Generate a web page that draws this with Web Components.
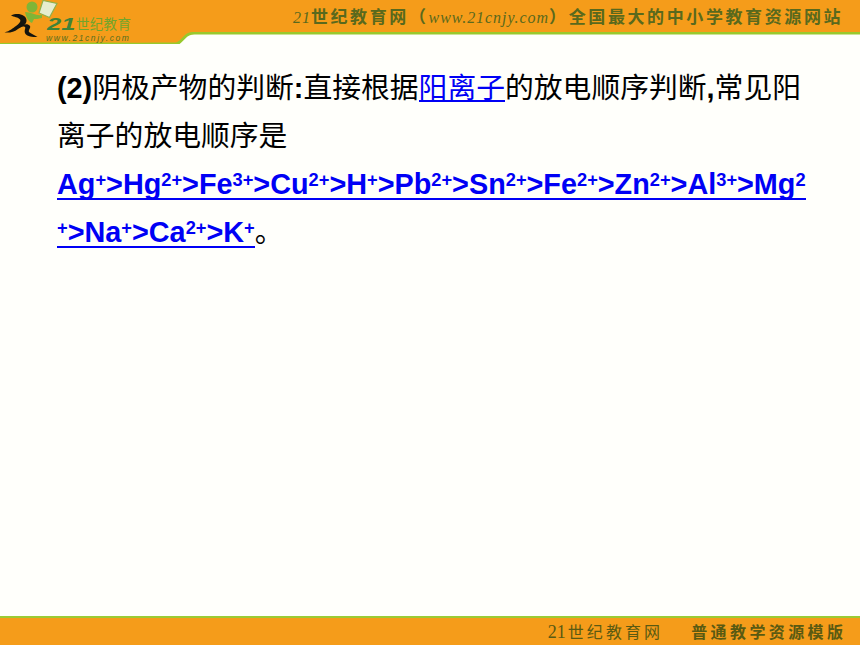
<!DOCTYPE html>
<html lang="zh"><head><meta charset="utf-8">
<style>
html,body{margin:0;padding:0;background:#fffffb}
body{width:860px;height:645px;display:flex;flex-direction:column;overflow:hidden;font-family:"Liberation Sans","Noto Sans CJK SC",sans-serif}
main{flex:1}
</style></head><body>
<site-header></site-header>
<main><lesson-text>
<text-line><b>(2)</b>阴极产物的判断<b>:</b>直接根据<u-link>阳离子</u-link>的放电顺序判断<b>,</b>常见阳</text-line>
<text-line>离子的放电顺序是</text-line>
<text-line><u-link strong>Ag<sup-s>+</sup-s>&gt;Hg<sup-s>2+</sup-s>&gt;Fe<sup-s>3+</sup-s>&gt;Cu<sup-s>2+</sup-s>&gt;H<sup-s>+</sup-s>&gt;Pb<sup-s>2+</sup-s>&gt;Sn<sup-s>2+</sup-s>&gt;Fe<sup-s>2+</sup-s>&gt;Zn<sup-s>2+</sup-s>&gt;Al<sup-s>3+</sup-s>&gt;Mg<sup-s>2</sup-s></u-link></text-line>
<text-line><u-link strong><sup-s>+</sup-s>&gt;Na<sup-s>+</sup-s>&gt;Ca<sup-s>2+</sup-s>&gt;K<sup-s>+</sup-s></u-link>。</text-line>
</lesson-text></main>
<site-footer></site-footer>
<script>
function def(name,html){customElements.define(name,class extends HTMLElement{constructor(){super();this.attachShadow({mode:'open'}).innerHTML=html}})}
def('lesson-text',`<style>:host{display:block;padding:20px 0 0 57px;font-size:28.8px;color:#000}</style><slot></slot>`);
def('text-line',`<style>:host{display:block;height:48px;line-height:48px;white-space:nowrap}::slotted(b){font-weight:700}</style><slot></slot>`);
def('u-link',`<style>:host{color:#0000f5;background:linear-gradient(#0000f5,#0000f5) 0 28px/100% 2px no-repeat}:host([strong]){font-weight:700;background-position:0 30px}</style><slot></slot>`);
def('sup-s',`<style>:host{font-size:.634em;vertical-align:.42em;line-height:0}</style><slot></slot>`);
def('run-logo',`<style>:host{display:block;width:46px;height:44px;flex:none}svg{display:block;overflow:visible}</style>
<svg width="46" height="44" viewBox="0 0 46 44">
<path d="M43 0.500 57 3.500 49.500 17.500 39 13Z" fill="#e6edcf" stroke="#8fb04a" stroke-width="1.200"/>
<circle cx="32" cy="7" r="5.500" fill="#7fb537"/>
<path d="M25 12C31 12 36 16 42 15L42 18C38 19 36 19 34 19L32 23C28 21 26 17 25 12Z" fill="#7fb537"/>
<path d="M11 15.500C18 12 26 15 26.500 20C27 25 21 27 18 29C14 32 10 33 4.500 32.500C10 31 13 28 16 26C20 23 21 21 20 19.500C18 17 14 17 11 15.500Z" fill="#15150f"/>
<path d="M19 27C23 24 28 23 30 26C31 28 28 30 29 32C31 34 35 35 37.500 37C32 37.500 26 36 25 33C24 30 26 28 25 27C23 26 21 27 19 27Z" fill="#15150f"/>
</svg>`);
def('site-header',`<style>
:host{display:block;height:44px;position:relative}
svg.bg{position:absolute;inset:0}
.row{position:relative;display:flex;height:44px}
.brand{width:100px;padding-top:18px;box-sizing:border-box;display:flex;flex-direction:column;flex:none}
.cn{display:flex;align-items:center;height:14px;white-space:nowrap;color:#71a52c;font:400 13.500px/14px "Liberation Sans","Noto Sans CJK SC",sans-serif;letter-spacing:.3px}
.cn b{display:inline-block;width:29px;margin-left:1px;flex:none;color:#3f8238;font:italic 700 17px/14px "Liberation Sans",sans-serif;letter-spacing:0;transform:scaleX(1.5);transform-origin:left center}
.en{font:italic 400 8.500px/7px "Liberation Sans",sans-serif;color:#566f20;letter-spacing:1.550px;white-space:nowrap;margin-top:3px}
.slogan{margin-left:147px;height:32px;white-space:nowrap;color:#59691d;font:700 17px/35px "Liberation Serif","Noto Sans CJK SC",sans-serif;letter-spacing:2.600px}
.slogan i{font-family:"Liberation Serif",serif;font-weight:400;font-size:16px;letter-spacing:.95px}
</style>
<svg class="bg" width="860" height="44" viewBox="0 0 860 44"><path d="M0 0H860V34H195C186 34 184 38 178 44H0Z" fill="#f59c1a"/><path d="M0 43C60 42 120 43 176 42.500C182 41 184 32 192 32H860V34.500H194C186 34.500 184 42 178 45H0Z" fill="#99c92c"/></svg>
<div class="row"><run-logo></run-logo><div class="brand"><div class="cn"><b>21</b>世纪教育</div><div class="en">www.21cnjy.com</div></div><div class="slogan"><i>21</i>世纪教育网<span>（</span><i>www.21cnjy.com</i><span>）</span>全国最大的中小学教育资源网站</div></div>`);
def('site-footer',`<style>
:host{display:flex;justify-content:flex-end;box-sizing:border-box;height:29px;background:#f59c1a;border-top:2px solid #9bcb34;white-space:nowrap;color:#5a5a12}
.a{font:400 16px/27px "Noto Sans CJK SC",serif;letter-spacing:3.100px}
.a i{font:400 18px/27px "Liberation Serif",serif;letter-spacing:0;margin-right:2px}
.b{font:700 16px/27px "Noto Sans CJK SC",sans-serif;letter-spacing:3.400px;margin:0 13.600px 0 28px}
</style><span class="a"><i>21</i>世纪教育网</span><span class="b">普通教学资源模版</span>`);
</script>
</body></html>
